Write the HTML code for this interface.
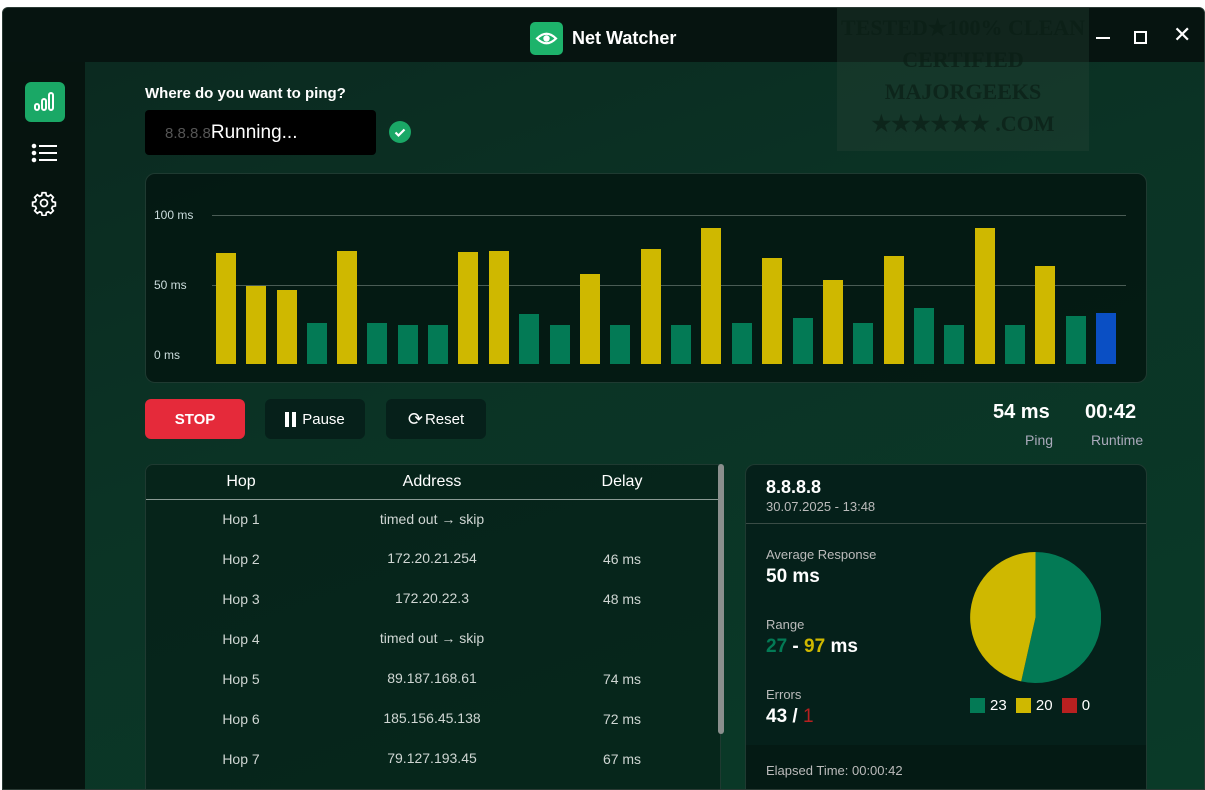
<!DOCTYPE html>
<html><head><meta charset="utf-8"><style>
*{margin:0;padding:0;box-sizing:border-box}
body{width:1205px;height:790px;overflow:hidden;background:#fff;font-family:"Liberation Sans",sans-serif;position:relative;color:#fff}
.win{position:absolute;left:2px;top:7px;width:1203px;height:783px;background:#06140f;border:1px solid #2a3a34;border-radius:6px 6px 0 0;overflow:hidden}
.title{position:absolute;left:0;top:0;width:100%;height:54px;background:#061410}
.main{position:absolute;left:82px;top:54px;right:0;bottom:0;background:linear-gradient(160deg,#0b2a20 0%,#0b3325 40%,#0a3a28 100%)}
.abs{position:absolute}
.card{position:absolute;background:rgba(4,22,17,0.85);border:1px solid #1f3a31;border-radius:10px}
.bar{position:absolute;width:20px;bottom:0}
.Y{background:#cfb800}.G{background:#037a55}.B{background:#0a4fc4}
.btn{position:absolute;height:40px;border-radius:6px;font-size:15px;display:flex;align-items:center;justify-content:center}
.row{position:absolute;left:0;width:572px;height:40px;font-size:14px;color:#cfd6d3}
.row span{position:absolute;top:12px;transform:translateX(-50%);white-space:nowrap}
</style></head><body>
<div class="win">
 <div class="title">
  <div class="abs" style="left:527px;top:14px;width:33px;height:33px;background:#1db36b;border-radius:5px">
   <svg width="33" height="33" viewBox="0 0 33 33"><path d="M7 16.5 Q16.5 7 26 16.5 Q16.5 26 7 16.5Z" fill="none" stroke="#fff" stroke-width="2.2"/><circle cx="16.5" cy="16.5" r="3.2" fill="#fff"/></svg>
  </div>
  <div class="abs" style="left:569px;top:20px;font-size:18px;font-weight:bold">Net Watcher</div>
  <div class="abs" style="left:834px;top:0;width:252px;height:143px;background:rgba(40,70,55,0.35);color:rgba(10,30,22,0.7);font-family:'Liberation Serif',serif;font-weight:bold;font-size:22px;text-align:center;line-height:32px;padding-top:4px;z-index:2;white-space:nowrap">TESTED★100% CLEAN<br>CERTIFIED<br>MAJORGEEKS<br>★★★★★★ .COM</div>
  <div class="abs" style="left:1093px;top:29px;width:14px;height:2px;background:#fff;z-index:3"></div>
  <div class="abs" style="left:1131px;top:23px;width:13px;height:13px;border:2px solid #fff;z-index:3"></div>
  <div class="abs" style="left:1170px;top:14px;font-size:22px;z-index:3">✕</div>
 </div>
 <div class="abs" style="left:22px;top:74px;width:40px;height:40px;background:#1aa866;border-radius:6px">
  <svg width="40" height="40" viewBox="0 0 40 40" fill="none" stroke="#fff" stroke-width="2"><rect x="10" y="22" width="4" height="6" rx="2"/><rect x="17" y="17" width="4" height="11" rx="2"/><rect x="24" y="11" width="4" height="17" rx="2"/></svg>
 </div>
 <svg class="abs" style="left:28px;top:135px" width="28" height="20" viewBox="0 0 28 20" stroke="#fff" stroke-width="2"><circle cx="3" cy="3" r="1.3" fill="#fff"/><circle cx="3" cy="10" r="1.3" fill="#fff"/><circle cx="3" cy="17" r="1.3" fill="#fff"/><path d="M8 3H26M8 10H26M8 17H26"/></svg>
 <svg class="abs" style="left:28px;top:182px" width="26" height="26" viewBox="0 0 24 24" fill="none" stroke="#fff" stroke-width="1.6"><circle cx="12" cy="12" r="3.2"/><path d="M10.3 2.5h3.4l.5 2.6 1.8.8 2.2-1.5 2.4 2.4-1.5 2.2.8 1.8 2.6.5v3.4l-2.6.5-.8 1.8 1.5 2.2-2.4 2.4-2.2-1.5-1.8.8-.5 2.6h-3.4l-.5-2.6-1.8-.8-2.2 1.5-2.4-2.4 1.5-2.2-.8-1.8-2.6-.5v-3.4l2.6-.5.8-1.8-1.5-2.2 2.4-2.4 2.2 1.5 1.8-.8z"/></svg>
 <div class="main"></div>
 <div class="abs" style="left:142px;top:77px;font-size:15px;font-weight:bold">Where do you want to ping?</div>
 <div class="abs" style="left:142px;top:102px;width:231px;height:45px;background:#000;border-radius:4px;font-size:19px;padding:12px 0 0 20px"><span style="color:#555;font-size:15px">8.8.8.8</span>Running...</div>
 <div class="abs" style="left:386px;top:113px;width:22px;height:22px;background:#1aa866;border-radius:50%"><svg width="22" height="22" viewBox="0 0 22 22"><path d="M6.5 11.5l3 3 6-6" fill="none" stroke="#fff" stroke-width="2.2"/></svg></div>
 <div class="card" style="left:142px;top:165px;width:1002px;height:210px">
  <div class="abs" style="left:8px;top:34px;font-size:12px;color:#cdd">100 ms</div>
  <div class="abs" style="left:8px;top:104px;font-size:12px;color:#cdd">50 ms</div>
  <div class="abs" style="left:8px;top:174px;font-size:12px;color:#cdd">0 ms</div>
  <div class="abs" style="left:66px;top:41px;width:914px;height:1px;background:#4a5c55"></div>
  <div class="abs" style="left:66px;top:111px;width:914px;height:1px;background:#4a5c55"></div>
  <div class="abs" style="left:0;top:0;width:1000px;height:190px">
   <div class="bar Y" style="left:70px;height:111px"></div><div class="bar Y" style="left:100px;height:78px"></div><div class="bar Y" style="left:131px;height:74px"></div><div class="bar G" style="left:161px;height:41px"></div><div class="bar Y" style="left:191px;height:113px"></div><div class="bar G" style="left:221px;height:41px"></div><div class="bar G" style="left:252px;height:39px"></div><div class="bar G" style="left:282px;height:39px"></div><div class="bar Y" style="left:312px;height:112px"></div><div class="bar Y" style="left:343px;height:113px"></div><div class="bar G" style="left:373px;height:50px"></div><div class="bar G" style="left:404px;height:39px"></div><div class="bar Y" style="left:434px;height:90px"></div><div class="bar G" style="left:464px;height:39px"></div><div class="bar Y" style="left:495px;height:115px"></div><div class="bar G" style="left:525px;height:39px"></div><div class="bar Y" style="left:555px;height:136px"></div><div class="bar G" style="left:586px;height:41px"></div><div class="bar Y" style="left:616px;height:106px"></div><div class="bar G" style="left:647px;height:46px"></div><div class="bar Y" style="left:677px;height:84px"></div><div class="bar G" style="left:707px;height:41px"></div><div class="bar Y" style="left:738px;height:108px"></div><div class="bar G" style="left:768px;height:56px"></div><div class="bar G" style="left:798px;height:39px"></div><div class="bar Y" style="left:829px;height:136px"></div><div class="bar G" style="left:859px;height:39px"></div><div class="bar Y" style="left:889px;height:98px"></div><div class="bar G" style="left:920px;height:48px"></div><div class="bar B" style="left:950px;height:51px"></div>
  </div>
 </div>
 <div class="btn" style="left:142px;top:391px;width:100px;background:#e52a3a;font-weight:bold">STOP</div>
 <div class="btn" style="left:262px;top:391px;width:100px;background:#06201a"><b style="display:inline-block;width:4px;height:15px;background:#fff;margin-right:3px"></b><b style="display:inline-block;width:4px;height:15px;background:#fff;margin-right:6px"></b>Pause</div>
 <div class="btn" style="left:383px;top:391px;width:100px;background:#06201a"><span style="font-size:18px;margin-right:2px">⟳</span>Reset</div>
 <div class="abs" style="left:990px;top:393px;font-size:20px;font-weight:bold">54 ms</div>
 <div class="abs" style="left:1022px;top:424px;font-size:14px;color:#aab">Ping</div>
 <div class="abs" style="left:1082px;top:393px;font-size:20px;font-weight:bold">00:42</div>
 <div class="abs" style="left:1088px;top:424px;font-size:14px;color:#aab">Runtime</div>
 <div class="card" style="left:142px;top:456px;width:576px;height:340px;border-radius:8px 0 0 0;background:rgba(4,26,20,0.6)">
  <div class="row" style="top:0;font-size:16px;color:#fff;border-bottom:1px solid #8a9a94;height:35px"><span style="left:95px;top:8px">Hop</span><span style="left:286px;top:8px">Address</span><span style="left:476px;top:8px">Delay</span></div>
  <div class="row" style="top:34px"><span style="left:95px">Hop 1</span><span style="left:286px">timed out → skip</span></div>
  <div class="row" style="top:74px"><span style="left:95px">Hop 2</span><span style="left:286px;top:11px">172.20.21.254</span><span style="left:476px">46 ms</span></div>
  <div class="row" style="top:114px"><span style="left:95px">Hop 3</span><span style="left:286px;top:11px">172.20.22.3</span><span style="left:476px">48 ms</span></div>
  <div class="row" style="top:154px"><span style="left:95px">Hop 4</span><span style="left:286px;top:11px">timed out → skip</span></div>
  <div class="row" style="top:194px"><span style="left:95px">Hop 5</span><span style="left:286px;top:11px">89.187.168.61</span><span style="left:476px">74 ms</span></div>
  <div class="row" style="top:234px"><span style="left:95px">Hop 6</span><span style="left:286px;top:11px">185.156.45.138</span><span style="left:476px">72 ms</span></div>
  <div class="row" style="top:274px"><span style="left:95px">Hop 7</span><span style="left:286px;top:11px">79.127.193.45</span><span style="left:476px">67 ms</span></div>
 </div>
 <div class="abs" style="left:715px;top:456px;width:6px;height:270px;background:#8a8f8d;border-radius:3px"></div>
 <div class="card" style="left:742px;top:456px;width:402px;height:340px;background:#05201a">
  <div class="abs" style="left:20px;top:12px;font-size:18px;font-weight:bold">8.8.8.8</div>
  <div class="abs" style="left:20px;top:34px;font-size:13px;color:#bbb">30.07.2025 - 13:48</div>
  <div class="abs" style="left:0;top:58px;width:400px;height:1px;background:#3a4c46"></div>
  <div class="abs" style="left:20px;top:82px;font-size:13px;color:#bbb">Average Response</div>
  <div class="abs" style="left:20px;top:101px;font-size:19px;font-weight:bold">50 ms</div>
  <div class="abs" style="left:20px;top:152px;font-size:13px;color:#bbb">Range</div>
  <div class="abs" style="left:20px;top:171px;font-size:19px;font-weight:bold"><span style="color:#037a55">27</span> - <span style="color:#cfb800">97</span> ms</div>
  <div class="abs" style="left:20px;top:222px;font-size:13px;color:#bbb">Errors</div>
  <div class="abs" style="left:20px;top:241px;font-size:19px;font-weight:bold">43 / <span style="color:#b82020;font-weight:normal">1</span></div>
  <svg class="abs" style="left:224px;top:87px" width="131" height="131" viewBox="0 0 130 130"><path d="M65 65L65 0A65 65 0 1 1 50.8 128.4Z" fill="#037a55"/><path d="M65 65L65 0A65 65 0 0 0 50.8 128.4Z" fill="#cfb800"/></svg>
  <div class="abs" style="left:224px;top:232px;font-size:15px;display:flex;align-items:center;gap:5px"><i style="width:15px;height:15px;background:#037a55;display:inline-block"></i>23&nbsp;<i style="width:15px;height:15px;background:#cfb800;display:inline-block"></i>20&nbsp;<i style="width:15px;height:15px;background:#b82020;display:inline-block"></i>0</div>
  <div class="abs" style="left:0;top:280px;width:400px;height:60px;background:#041a14"></div>
  <div class="abs" style="left:20px;top:298px;font-size:13px;color:#bbb">Elapsed Time: 00:00:42</div>
 </div>
</div>
</body></html>
